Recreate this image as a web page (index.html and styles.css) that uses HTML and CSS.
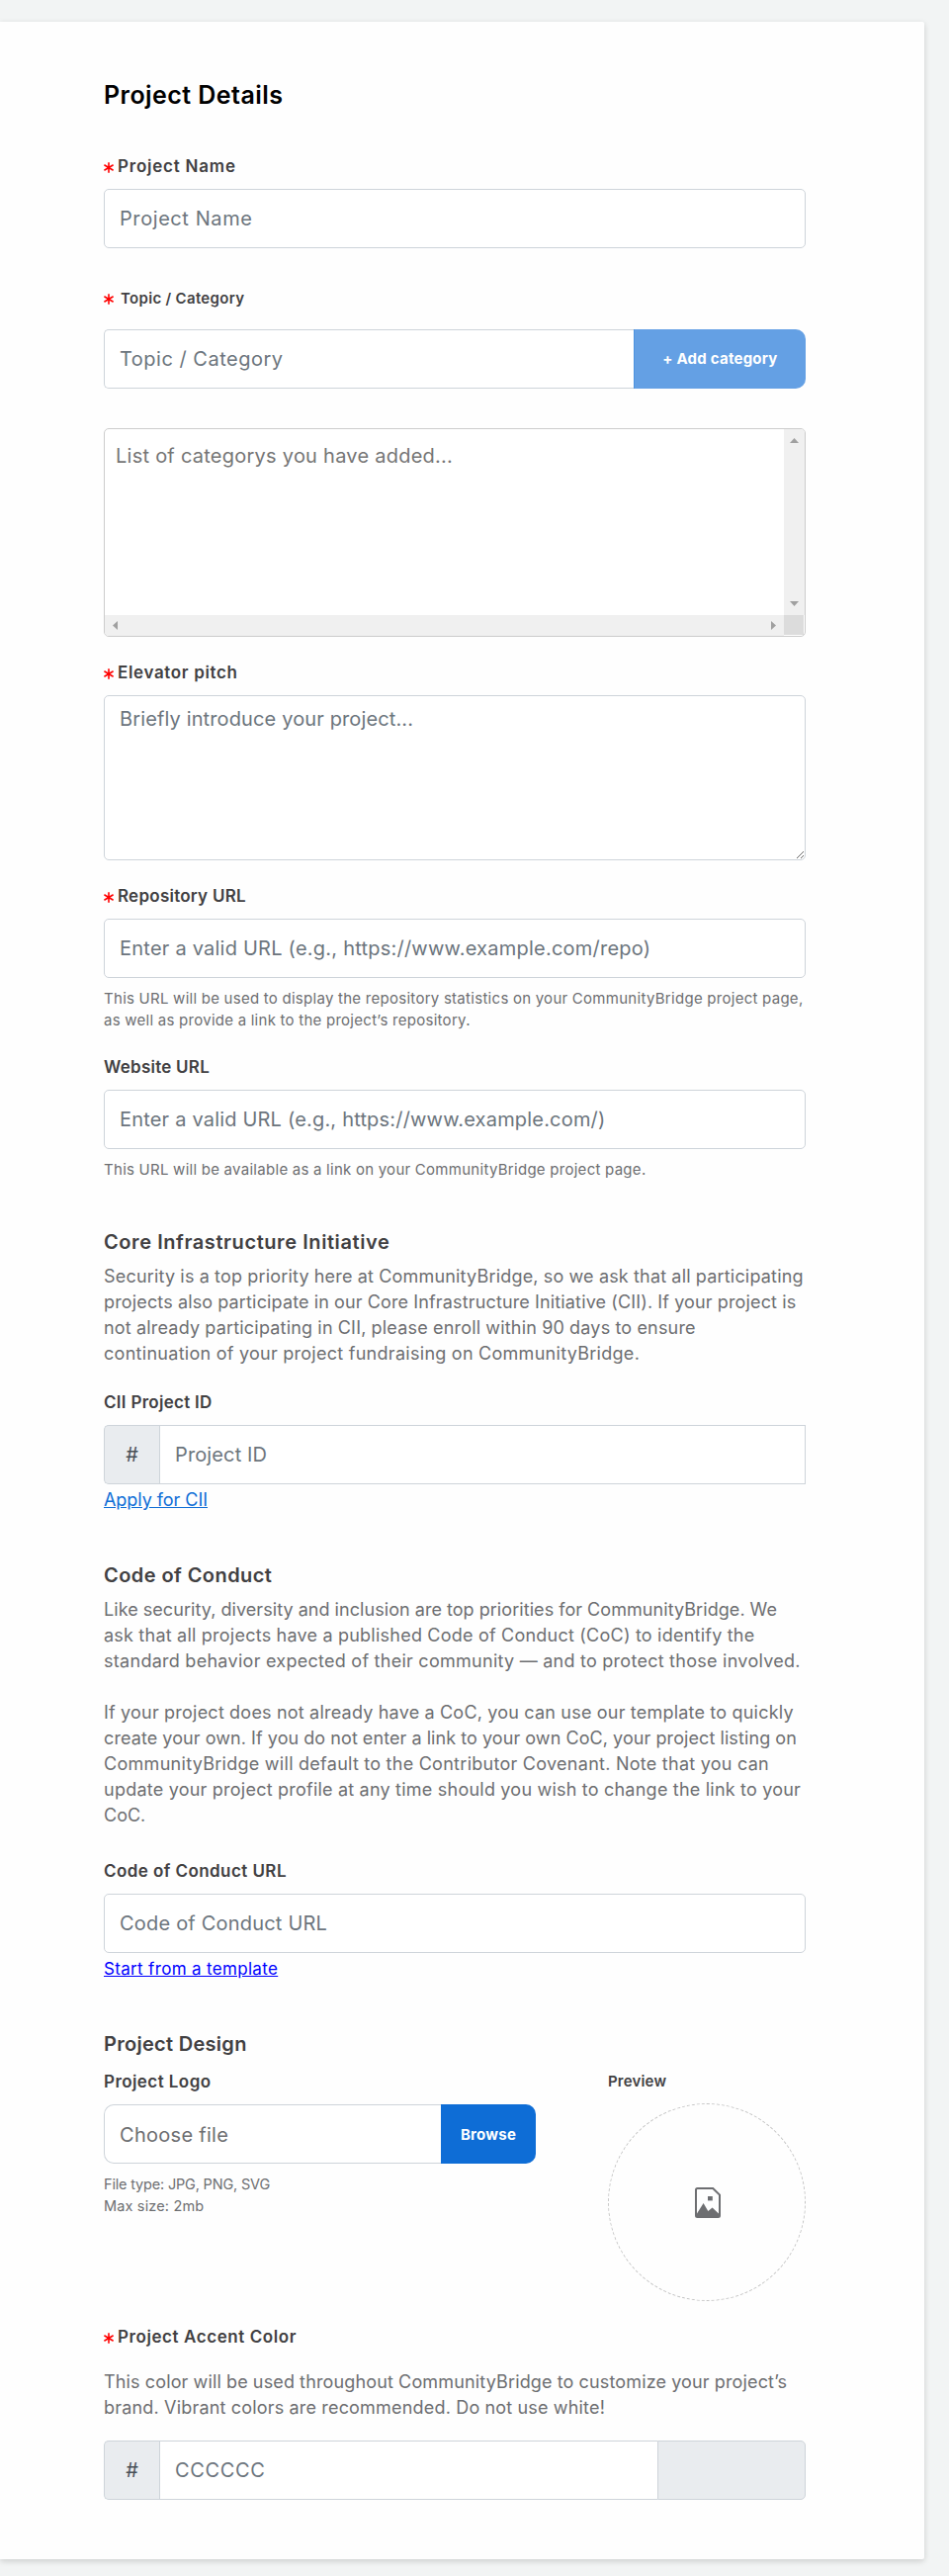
FILE: index.html
```
<!DOCTYPE html>
<html lang="en">
<head>
<meta charset="utf-8">
<title>Project Details</title>
<link rel="stylesheet" href="styles.css">
</head>
<body>
<svg class="defs" width="0" height="0" aria-hidden="true">
  <symbol id="star" viewBox="0 0 10 11"><path d="M5 .3v10.4M.4 2.8l9.2 5.4M9.6 2.8L.4 8.2" stroke="#f00" stroke-width="1.6" fill="none"/></symbol>
</svg>
<main class="card">
  <h1 class="title">Project Details</h1>

  <label class="label label-first ls78"><svg class="star"><use href="#star"/></svg>Project Name</label>
  <input class="control ls58" placeholder="Project Name">

  <label class="label label-topic"><svg class="star"><use href="#star"/></svg>Topic / Category</label>
  <div class="group group-topic">
    <input class="control ls50" placeholder="Topic / Category">
    <button class="btn btn-add">+ Add category</button>
  </div>

  <div class="list">
    <div class="list-body ls25">List of categorys you have added...</div>
    <div class="bar bar-v">
      <svg width="9" height="5"><path d="M0 5L4.500 0 9 5z"/></svg>
      <svg width="9" height="5"><path d="M0 0L4.500 5 9 0z"/></svg>
    </div>
    <div class="bar bar-h">
      <svg width="5" height="9"><path d="M5 0L0 4.500 5 9z"/></svg>
      <svg width="5" height="9"><path d="M0 0L5 4.500 0 9z"/></svg>
    </div>
    <div class="corner"></div>
  </div>

  <label class="label ls65"><svg class="star"><use href="#star"/></svg>Elevator pitch</label>
  <textarea class="control area ls13" placeholder="Briefly introduce your project..."></textarea>

  <label class="label ls25"><svg class="star"><use href="#star"/></svg>Repository URL</label>
  <input class="control ls23" placeholder="Enter a valid URL (e.g., https://www.example.com/repo)">
  <p class="help ls29">This URL will be used to display the repository statistics on your CommunityBridge project page,<br>as well as provide a link to the project’s repository.</p>

  <label class="label ls25">Website URL</label>
  <input class="control ls19" placeholder="Enter a valid URL (e.g., https://www.example.com/)">
  <p class="help ls29">This URL will be available as a link on your CommunityBridge project page.</p>

  <h2 class="heading heading-core ls58">Core Infrastructure Initiative</h2>
  <p class="text"><span class="ls19">Security is a top priority here at CommunityBridge, so we ask that all participating</span><br><span class="ls15">projects also participate in our Core Infrastructure Initiative (CII). If your project is</span><br><span class="ls19">not already participating in CII, please enroll within 90 days to ensure</span><br><span class="ls29">continuation of your project fundraising on CommunityBridge.</span></p>

  <label class="label ls29">CII Project ID</label>
  <div class="group">
    <span class="addon">#</span>
    <input class="control square ls13" placeholder="Project ID">
  </div>
  <a class="link link-cii" href="#">Apply for CII</a>

  <h2 class="heading ls43">Code of Conduct</h2>
  <p class="text"><span class="ls07">Like security, diversity and inclusion are top priorities for CommunityBridge. We</span><br><span class="ls25">ask that all projects have a published Code of Conduct (CoC) to identify the</span><br><span class="ls29">standard behavior expected of their community — and to protect those involved.</span><br><br><span class="ls23">If your project does not already have a CoC, you can use our template to quickly</span><br><span class="ls10">create your own. If you do not enter a link to your own CoC, your project listing on</span><br><span class="ls29">CommunityBridge will default to the Contributor Covenant. Note that you can</span><br><span class="ls25">update your project profile at any time should you wish to change the link to your</span><br>CoC.</p>

  <label class="label label-coc ls43">Code of Conduct URL</label>
  <input class="control ls20" placeholder="Code of Conduct URL">
  <a class="link link-template" href="#">Start from a template</a>

  <h2 class="heading ls29">Project Design</h2>
  <div class="design">
    <div class="logo">
      <label class="label label-logo ls43">Project Logo</label>
      <div class="group file">
        <span class="control file-name ls29">Choose file</span>
        <span class="btn btn-browse">Browse</span>
      </div>
      <p class="help help-file"><span class="file-type">File type: JPG, PNG, SVG</span><br><span class="ls15">Max size: 2mb</span></p>
    </div>
    <div class="preview">
      <label class="label label-preview">Preview</label>
      <div class="circle">
        <svg width="26" height="31" viewBox="0 0 26 31"><path d="M1 2.500Q1 1 2.500 1H18.200L25 7.600V28.500Q25 30 23.500 30H2.500Q1 30 1 28.500z" fill="none" stroke="#6d6e71" stroke-width="2"/><path d="M2 26.500L8.600 16 13.300 24 17.600 20.500 24 26.500V30H2z" fill="#6d6e71"/><path d="M13 9h4.800v4.400H13z" fill="#6d6e71"/></svg>
      </div>
    </div>
  </div>

  <label class="label ls58"><svg class="star"><use href="#star"/></svg>Project Accent Color</label>
  <p class="text text-accent"><span class="ls15">This color will be used throughout CommunityBridge to customize your project’s</span><br><span class="ls20">brand. Vibrant colors are recommended. Do not use white!</span></p>
  <div class="group group-accent">
    <span class="addon">#</span>
    <input class="control square ls65" placeholder="CCCCCC">
    <span class="addon swatch"></span>
  </div>
</main>
</body>
</html>
```
FILE: styles.css
```
* { box-sizing: border-box; }
body {
  margin: 0;
  padding: 22px 25px 17px 0;
  background: #f2f4f4;
  font-family: Inter, "Open Sans", sans-serif;
  color: #414042;
}
.defs { position: absolute; }
.card {
  height: 2566px;
  padding: 55px 120px 0 105px;
  background: #fefefe;
  border-radius: 0 2px 2px 0;
  box-shadow: 0 2px 6px rgba(0, 0, 0, .16);
}
h1, h2, p { margin: 0; }
.title { font-size: 25px; line-height: 38px; font-weight: 600; letter-spacing: .45px; color: #000; }

.label {
  display: flex;
  align-items: center;
  margin: 24px 0 11px;
  font-size: 17px;
  line-height: 24px;
  font-weight: 600;
  white-space: nowrap;
}
.label-first { margin-top: 41px; }
.label-topic { margin: 39px 0 19px; font-size: 15px; letter-spacing: .31px; }
.label-coc { margin-top: 31px; }
.label-logo { margin: 11px 0 11px; }
.label-preview { margin: 11px 0 10px; font-size: 15px; letter-spacing: .19px; }
.star { width: 10px; height: 11px; margin: 2px 4px 0 0; flex: none; }
.label-topic .star { margin: 0 7px 0 0; }

.control {
  display: block;
  width: 100%;
  height: 60px;
  padding: 0 15px;
  border: 1px solid #ced4da;
  border-radius: 5px;
  background: #fff;
  font: 400 20px/30px Inter, "Open Sans", sans-serif;
  outline: 0;
}
.control::placeholder { color: #6c757d; opacity: 1; }
.area { height: 167px; padding-top: 8px; resize: vertical; }
.square { border-radius: 0; }

.group { display: flex; height: 60px; }
.group .control { flex: 1; min-width: 0; }
.group-topic .control { border-right: 0; border-radius: 5px 0 0 5px; }
.addon {
  width: 56px;
  flex: none;
  border: 1px solid #ced4da;
  border-right: 0;
  border-radius: 5px 0 0 5px;
  background: #e9ecef;
  color: #495057;
  font-size: 20px;
  line-height: 58px;
  text-align: center;
}
.group-accent .control { border-right: 0; }
.swatch { width: 150px; border-right: 1px solid #ced4da; border-radius: 0 5px 5px 0; }
.group-accent { margin-top: 20px; }

.btn {
  display: flex;
  align-items: center;
  justify-content: center;
  flex: none;
  height: 60px;
  padding: 0;
  border: 0;
  border-radius: 0 10px 10px 0;
  color: #fff;
  font: 700 15px/24px Inter, "Open Sans", sans-serif;
  letter-spacing: .23px;
}
.btn-add { width: 174px; background: #64a0e4; border-left: 1px solid #4e93df; }
.btn-browse { width: 96px; padding-top: 2px; background: #0e6dd6; }

.list {
  display: grid;
  grid-template: 188px 21px / 1fr 21px;
  height: 211px;
  margin-top: 40px;
  border: 1px solid #ccc;
  border-radius: 5px;
  background: #fff;
  overflow: hidden;
}
.list-body { padding: 12px 11px; font-size: 20px; line-height: 30px; color: #757575; }
.bar { display: flex; align-items: center; justify-content: space-between; background: #f0f0f0; fill: #a0a0a0; }
.bar-v { flex-direction: column; padding: 9px 0; }
.bar-h { padding: 0 8px; }
.corner { margin: 0 1px 1px 0; background: #dcdcdc; }

.help { margin-top: 10px; font-size: 15px; line-height: 22px; color: #6d6e71; white-space: nowrap; word-spacing: -.18px; }
.help-file { font-size: 14.5px; word-spacing: 0; }
.file-type { letter-spacing: -.18px; }
.heading { margin-top: 48px; font-size: 20px; line-height: 30px; font-weight: 600; }
.heading-core { margin-top: 47px; }
.text { margin-top: 7px; font-size: 18px; line-height: 26px; color: #6d6e71; white-space: nowrap; word-spacing: -.18px; }
.text-accent { margin-top: 21px; }
.link { display: block; width: fit-content; margin-top: 3px; line-height: 26px; }
.link-cii { font-size: 18px; letter-spacing: -.05px; color: #0e6dd6; }
.link-template { font-size: 17px; letter-spacing: .33px; color: #00f; }

.design { display: flex; justify-content: space-between; }
.logo { width: 437px; }
.preview { width: 200px; }
.file .file-name { border-right: 0; border-radius: 10px 0 0 10px; line-height: 60px; color: #6d6e71; }
.circle {
  display: flex;
  align-items: center;
  justify-content: center;
  height: 200px;
  padding-left: 1px;
  border: 1px dashed #c4c4c4;
  border-radius: 50%;
}

/* Tracking steps, in hundredths of a pixel */
.ls07 { letter-spacing: .07px; }
.ls10 { letter-spacing: .1px; }
.ls13 { letter-spacing: .13px; }
.ls15 { letter-spacing: .15px; }
.ls19 { letter-spacing: .19px; }
.ls20 { letter-spacing: .2px; }
.ls23 { letter-spacing: .23px; }
.ls25 { letter-spacing: .25px; }
.ls29 { letter-spacing: .29px; }
.ls43 { letter-spacing: .43px; }
.ls50 { letter-spacing: .5px; }
.ls58 { letter-spacing: .58px; }
.ls65 { letter-spacing: .65px; }
.ls78 { letter-spacing: .78px; }
```
